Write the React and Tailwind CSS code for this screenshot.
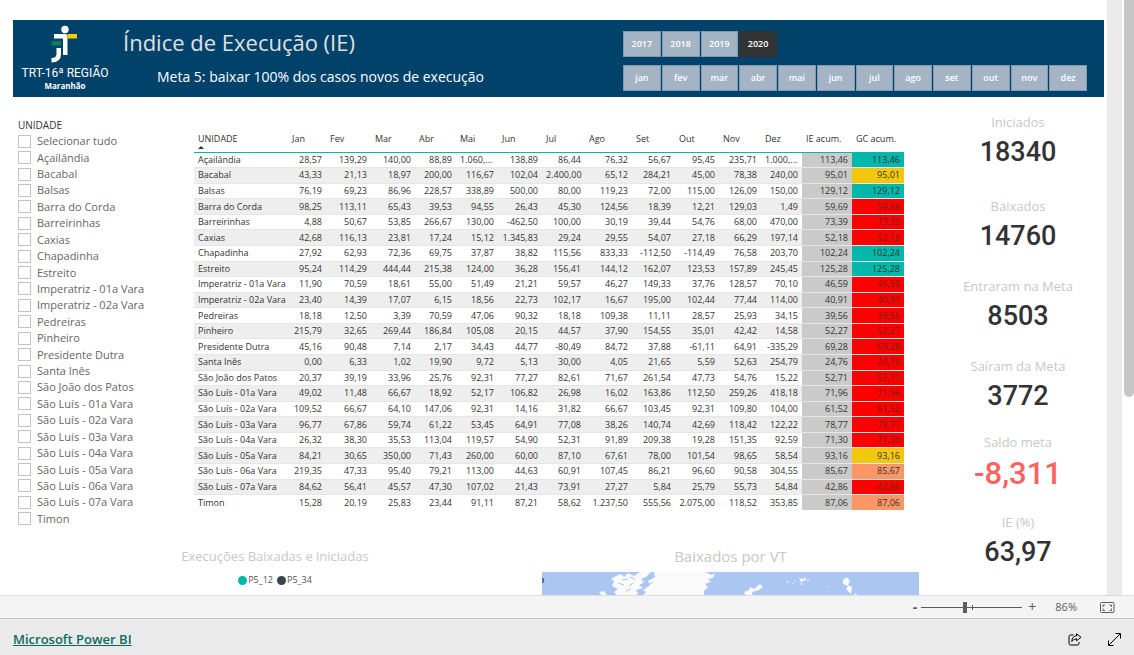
import React from 'react';
import clsx from 'clsx';

const YEARS = ['2017', '2018', '2019', '2020'];
const MONTHS = ['jan', 'fev', 'mar', 'abr', 'mai', 'jun', 'jul', 'ago', 'set', 'out', 'nov', 'dez'];

const COLUMNS = [
  { label: 'UNIDADE', width: 'w-[94px]' },
  { label: 'Jan', width: 'w-[38px]' },
  { label: 'Fev', width: 'w-[45px]' },
  { label: 'Mar', width: 'w-[44px]' },
  { label: 'Abr', width: 'w-[41px]' },
  { label: 'Mai', width: 'w-[42px]' },
  { label: 'Jun', width: 'w-[44px]' },
  { label: 'Jul', width: 'w-[43px]' },
  { label: 'Ago', width: 'w-[47px]' },
  { label: 'Set', width: 'w-[43px]' },
  { label: 'Out', width: 'w-[44px]' },
  { label: 'Nov', width: 'w-[42px]' },
  { label: 'Dez', width: 'w-[41px]' },
  { label: 'IE acum.', width: 'w-[50px]' },
  { label: 'GC acum.', width: 'w-[52px]' },
];

const ROWS = [
  ['Açailândia', '28,57', '139,29', '140,00', '88,89', '1.060,...', '138,89', '86,44', '76,32', '56,67', '95,45', '235,71', '1.000,...', '113,46'],
  ['Bacabal', '43,33', '21,13', '18,97', '200,00', '116,67', '102,04', '2.400,00', '65,12', '284,21', '45,00', '78,38', '240,00', '95,01'],
  ['Balsas', '76,19', '69,23', '86,96', '228,57', '338,89', '500,00', '80,00', '119,23', '72,00', '115,00', '126,09', '150,00', '129,12'],
  ['Barra do Corda', '98,25', '113,11', '65,43', '39,53', '94,55', '26,43', '45,30', '124,56', '18,39', '12,21', '129,03', '1,49', '59,69'],
  ['Barreirinhas', '4,88', '50,67', '53,85', '266,67', '130,00', '-462,50', '100,00', '30,19', '39,44', '54,76', '68,00', '470,00', '73,39'],
  ['Caxias', '42,68', '116,13', '23,81', '17,24', '15,12', '1.345,83', '29,24', '29,55', '54,07', '27,18', '66,29', '197,14', '52,18'],
  ['Chapadinha', '27,92', '62,93', '72,36', '69,75', '37,87', '38,82', '115,56', '833,33', '-112,50', '-114,49', '76,58', '203,70', '102,24'],
  ['Estreito', '95,24', '114,29', '444,44', '215,38', '124,00', '36,28', '156,41', '144,12', '162,07', '123,53', '157,89', '245,45', '125,28'],
  ['Imperatriz - 01a Vara', '11,90', '70,59', '18,61', '55,00', '51,49', '21,21', '59,57', '46,27', '149,33', '37,76', '128,57', '70,10', '46,59'],
  ['Imperatriz - 02a Vara', '23,40', '14,39', '17,07', '6,15', '18,56', '22,73', '102,17', '16,67', '195,00', '102,44', '77,44', '114,00', '40,91'],
  ['Pedreiras', '18,18', '12,50', '3,39', '70,59', '47,06', '90,32', '18,18', '109,38', '11,11', '28,57', '25,93', '34,15', '39,56'],
  ['Pinheiro', '215,79', '32,65', '269,44', '186,84', '105,08', '20,15', '44,57', '37,90', '154,55', '35,01', '42,42', '14,58', '52,27'],
  ['Presidente Dutra', '45,16', '90,48', '7,14', '2,17', '34,43', '44,77', '-80,49', '84,72', '37,88', '-61,11', '64,91', '-335,29', '69,28'],
  ['Santa Inês', '0,00', '6,33', '1,02', '19,90', '9,72', '5,13', '30,00', '4,05', '21,65', '5,59', '52,63', '254,79', '24,76'],
  ['São João dos Patos', '20,37', '39,19', '33,96', '25,76', '92,31', '77,27', '82,61', '71,67', '261,54', '47,73', '54,76', '15,22', '52,71'],
  ['São Luís - 01a Vara', '49,02', '11,48', '66,67', '18,92', '52,17', '106,82', '26,98', '16,02', '163,86', '112,50', '259,26', '418,18', '71,96'],
  ['São Luís - 02a Vara', '109,52', '66,67', '64,10', '147,06', '92,31', '14,16', '31,82', '66,67', '103,45', '92,31', '109,80', '104,00', '61,52'],
  ['São Luís - 03a Vara', '96,77', '67,86', '59,74', '61,22', '53,45', '64,91', '77,08', '38,26', '140,74', '42,69', '118,42', '122,22', '78,77'],
  ['São Luís - 04a Vara', '26,32', '38,30', '35,53', '113,04', '119,57', '54,90', '52,31', '91,89', '209,38', '19,28', '151,35', '92,59', '71,30'],
  ['São Luís - 05a Vara', '84,21', '30,65', '350,00', '71,43', '260,00', '60,00', '87,10', '67,61', '78,00', '101,54', '98,65', '58,54', '93,16'],
  ['São Luís - 06a Vara', '219,35', '47,33', '95,40', '79,21', '113,00', '44,63', '60,91', '107,45', '86,21', '96,60', '90,58', '304,55', '85,67'],
  ['São Luís - 07a Vara', '84,62', '56,41', '45,57', '47,30', '107,02', '21,43', '73,91', '27,27', '5,84', '25,79', '55,73', '54,84', '42,86'],
  ['Timon', '15,28', '20,19', '25,83', '23,44', '91,11', '87,21', '58,62', '1.237,50', '555,56', '2.075,00', '118,52', '353,85', '87,06'],
];

const KPIS = [
  { label: 'Iniciados', value: '18340', height: 'h-21' },
  { label: 'Baixados', value: '14760', height: 'h-20' },
  { label: 'Entraram na Meta', value: '8503', height: 'h-20' },
  { label: 'Saíram da Meta', value: '3772', height: 'h-19' },
  { label: 'Saldo meta', value: '-8,311', height: 'h-20', negative: true },
  { label: 'IE (%)', value: '63,97', height: 'h-20' },
];

const goalColor = (text) => {
  const value = parseFloat(text.replace(',', '.'));
  if (value >= 100) return 'bg-[#01b8aa] text-[#333333]';
  if (value >= 90) return 'bg-[#f2c80f] text-[#333333]';
  if (value >= 80) return 'bg-[#fd9666] text-[#333333]';
  return 'bg-[#ff0000] text-[#70201c]';
};

const Logo = () => (
  <div className="flex w-[104px] shrink-0 flex-col items-center text-white">
    <svg className="mt-1 h-[40px] w-[30px]" viewBox="0 0 30 40" aria-hidden="true">
      <circle cx="15" cy="5.5" r="3.7" fill="#fff" />
      <path d="M4 10H15Q17.500 10 17.500 12.500V31H13V14.500H4Z" fill="#fff" />
      <rect x="17.500" y="10" width="9.500" height="4.500" fill="#fdcb00" />
      <rect x="1.500" y="17" width="9.500" height="4.500" fill="#0b7d5b" />
      <path d="M6.500 24H11V30Q11 38.500 1.500 38.500V34Q6.500 34 6.500 30Z" fill="#fff" />
    </svg>
    <div className="font-['Roboto',sans-serif] text-[12px] leading-[18px] whitespace-nowrap">TRT-16ª REGIÃO</div>
    <div className="text-[8px] leading-[8px] font-bold">Maranhão</div>
  </div>
);

const SlicerButton = ({ label, selected }) => (
  <button
    type="button"
    aria-pressed={Boolean(selected)}
    className={clsx(
      'h-[26px] border text-[9px] font-semibold text-white',
      selected ? 'border-[#333333] bg-[#333333]' : 'border-[#7f9bb2] bg-[#a5b4c5]'
    )}
  >
    {label}
  </button>
);

const Header = () => (
  <header className="flex h-[77px] bg-[#00426a]">
    <Logo />
    <div className="flex-1 whitespace-nowrap text-[#e1e1e1]">
      <h1 className="pl-1.5 text-[22px] leading-[44px] font-medium">Índice de Execução (IE)</h1>
      <p className="pl-10 text-[14px] leading-[26px] text-white">Meta 5: baixar 100% dos casos novos de execução</p>
    </div>
    <div className="mr-[17px] flex w-[464px] flex-col gap-2 pt-[11px]">
      <div className="grid grid-cols-12 gap-px">
        {YEARS.map((year) => (
          <SlicerButton key={year} label={year} selected={year === '2020'} />
        ))}
      </div>
      <div className="grid grid-cols-12 gap-px">
        {MONTHS.map((month) => (
          <SlicerButton key={month} label={month} />
        ))}
      </div>
    </div>
  </header>
);

const UnitSlicer = () => (
  <fieldset className="w-[181px] shrink-0 pt-5 pl-[5px]">
    <legend className="float-left text-[10px] leading-4 text-[#333333]">UNIDADE</legend>
    <ul className="clear-both grid h-[394px] auto-rows-fr">
      {['Selecionar tudo', ...ROWS.map((row) => row[0])].map((unit) => (
        <li key={unit} className="flex items-center">
          <label className="flex items-center gap-1.5 text-[11px] leading-4 whitespace-nowrap text-[#666666]">
            <input type="checkbox" className="size-[13px] shrink-0 appearance-none border border-[#c3c3c3] bg-white checked:bg-[#666666]" />
            {unit}
          </label>
        </li>
      ))}
    </ul>
  </fieldset>
);

const UnitTable = () => (
  <div className="flex-1 pt-[33px]">
    <table className="h-[380px] w-full table-fixed border-collapse text-[9px] leading-[14px] whitespace-nowrap text-[#333333]">
      <thead>
        <tr className="h-[22px]">
          {COLUMNS.map(({ label, width }) => (
            <th
              key={label}
              scope="col"
              className={clsx('relative border-b border-[#01b8aa] px-1 pt-0.5 text-left align-top font-normal', width)}
            >
              {label}
              {label === 'UNIDADE' && (
                <span className="absolute bottom-[3px] left-1 border-x-[3px] border-b-[3px] border-x-transparent border-b-[#333333]" />
              )}
            </th>
          ))}
        </tr>
      </thead>
      <tbody>
        {ROWS.map(([unit, ...values]) => {
          const total = values[values.length - 1];
          return (
            <tr key={unit} className="border-b border-[#e6e6e6] last:border-b-0 even:bg-[#eeeeee]">
              <td className="px-1">{unit}</td>
              {values.map((value, index) => (
                <td
                  key={index}
                  className={clsx('px-1', value.endsWith('...') ? 'text-left' : 'text-right', index === 12 && 'bg-[#cacaca]')}
                >
                  {value}
                </td>
              ))}
              <td className={clsx('px-1 text-right', goalColor(total))}>{total}</td>
            </tr>
          );
        })}
      </tbody>
    </table>
  </div>
);

const MapPreview = () => (
  <svg className="block h-[140px] w-full bg-[#abc6f1]" viewBox="0 0 377 140" preserveAspectRatio="xMinYMin slice" role="img" aria-label="Mapa">
    <path d="M0 6Q3 8 0 11" fill="none" stroke="#2f5597" strokeWidth="1.500" />
    <g fill="#fafafa">
      <path d="M74 4L79 2L82 5L86 1L92 4L98 0H109L104 5L99 7L103 10L97 13L101 16L94 18L96 22L90 25H76L72 20L76 17L70 14L72 9L69 7Z" />
      <path d="M112 0H163L170 3L173 1L171 6L166 7L169 10L163 12L166 15L162 19V26H98L104 20L101 18L108 13L106 9L113 5Z" />
      <path d="M57 20L62 19L65 23L60 24Z" />
      <path d="M202 20L207 18L208 15L212 17L218 12L221 15L217 18L210 20L211 25H204Z" />
      <path d="M301 8L305 5L308 9L306 13L310 15L309 22L304 17L306 14L301 12Z" />
      <path d="M312 21L316 23L313 25Z" />
      <path d="M244 9l3 1l-2 1zM252 8l2 1l-1 1zM257 6l4 1l2-2l1 3l-5 2zM265 8l2-1l-1 3zM258 11l3 1l-2 1zM250 11l2 1h-2zM285 14l2 1h-2z" />
    </g>
    <path d="M80 8L86 7M88 5L93 7M76 11L82 13M87 14L91 11M100 10L105 7M84 19L89 17M106 13L111 10" fill="none" stroke="#abc6f1" />
  </svg>
);

const Kpi = ({ label, value, height, negative }) => (
  <div className={clsx('flex flex-col items-center', height)}>
    <div className="text-[13px] leading-5 text-[#c8c8c8]">{label}</div>
    <div
      className={clsx(
        "font-['Roboto',sans-serif] font-medium",
        negative ? 'text-[31px] leading-11 text-[#fd625e]' : 'text-[27px] leading-10 text-[#333333]'
      )}
    >
      {value}
    </div>
  </div>
);

const ZoomBar = () => (
  <div className="flex h-[23px] shrink-0 items-center justify-end border-t border-[#dddddd] bg-[#f4f4f4] pr-[19px] text-[#5c5c5c]">
    <button type="button" aria-label="Diminuir zoom" className="mr-1 text-[14px] leading-5 font-bold">-</button>
    <div className="relative flex items-center">
      <input
        type="range"
        min="0"
        max="100"
        defaultValue="43"
        aria-label="Zoom"
        className="h-3 w-[101px] appearance-none bg-transparent [&::-webkit-slider-runnable-track]:h-px [&::-webkit-slider-runnable-track]:bg-[#5c5c5c] [&::-webkit-slider-thumb]:-mt-[5px] [&::-webkit-slider-thumb]:h-[11px] [&::-webkit-slider-thumb]:w-1 [&::-webkit-slider-thumb]:appearance-none [&::-webkit-slider-thumb]:bg-[#5c5c5c]"
      />
      <span className="absolute left-1/2 h-[5px] w-px bg-[#5c5c5c]" />
    </div>
    <button type="button" aria-label="Aumentar zoom" className="ml-1.5 text-[14px] leading-5">+</button>
    <span className="ml-[19px] text-[11px] leading-5">86%</span>
    <button type="button" aria-label="Ajustar à página" className="ml-[23px]">
      <svg className="h-[11px] w-[15px]" viewBox="0 0 15 11" fill="none" stroke="currentColor">
        <rect x="0.5" y="0.5" width="13.500" height="10" rx="1" />
        <path d="M3 5V3H5M9.500 3H11.500V5M11.500 6.500V8.500H9.500M5 8.500H3V6.500" />
      </svg>
    </button>
  </div>
);

const Footer = () => (
  <footer className="flex h-[37px] shrink-0 items-center border-t border-[#c6c6c6] bg-[#eaeaea] px-[13px] pt-1 text-black">
    <a href="#powerbi" className="text-[13px] leading-5 font-semibold text-[#0d6a62] underline">Microsoft Power BI</a>
    <button type="button" aria-label="Compartilhar" className="ml-auto">
      <svg className="h-[13px] w-[14px]" viewBox="0 0 14 13" fill="none" stroke="currentColor" strokeLinejoin="round">
        <path d="M5.500 2H2.500Q1 2 1 3.500V10.500Q1 12 2.500 12H9.500Q11 12 11 10.500V9" />
        <path d="M8.500 0.800L13 4.300L8.500 7.800V5.800Q5.500 5.800 3.800 8.500Q4 3.200 8.500 2.900Z" />
      </svg>
    </button>
    <button type="button" aria-label="Tela inteira" className="ml-[26px]">
      <svg className="size-[13px]" viewBox="0 0 13 13" fill="none" stroke="currentColor">
        <path d="M1 12L12 1M7.500 0.500H12.500V5.500M0.500 7.500V12.500H5.500" />
      </svg>
    </button>
  </footer>
);

const App = () => (
  <div className="flex h-screen flex-col bg-white font-['Open_Sans','Noto_Sans',sans-serif]">
    <div className="flex min-h-0 flex-1">
      <main className="flex-1 overflow-hidden pt-5 pr-[3px] pl-[13px]">
        <Header />
        <div className="flex">
          <div className="flex-1">
            <div className="flex pr-7">
              <UnitSlicer />
              <UnitTable />
            </div>
            <div className="grid grid-cols-[524fr_377fr] gap-[5px] pt-[17px] pr-[13px]">
              <section className="flex flex-col items-center">
                <h2 className="text-[13px] leading-6 text-[#c8c8c8]">Execuções Baixadas e iniciadas</h2>
                <ul className="flex gap-1 pt-1 text-[9px] leading-4 text-[#555555]">
                  <li className="flex items-center gap-px">
                    <span className="size-[9px] rounded-full bg-[#01b8aa]" />
                    P5_12
                  </li>
                  <li className="flex items-center gap-px">
                    <span className="size-[9px] rounded-full bg-[#374649]" />
                    P5_34
                  </li>
                </ul>
              </section>
              <section>
                <h2 className="pb-1 text-center text-[15px] leading-6 text-[#c8c8c8]">Baixados por VT</h2>
                <MapPreview />
              </section>
            </div>
          </div>
          <aside className="w-[172px] shrink-0 pt-[15px]">
            {KPIS.map((kpi) => (
              <Kpi key={kpi.label} {...kpi} />
            ))}
          </aside>
        </div>
      </main>
      <div className="w-[15px] shrink-0 bg-[#eaeaea]" />
      <div className="w-3 shrink-0 pl-0.5">
        <div className="h-2/3 rounded-b-full bg-[#c6c6c6]" />
      </div>
    </div>
    <ZoomBar />
    <Footer />
  </div>
);

export default App;
